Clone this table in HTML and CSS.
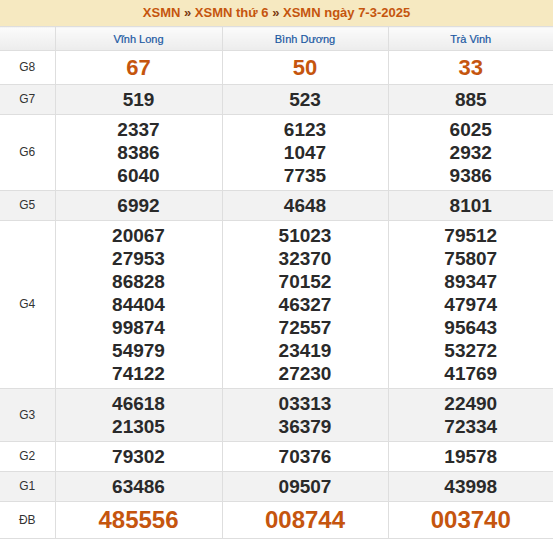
FILE: index.html
```html
<!DOCTYPE html>
<html lang="vi">
<head>
<meta charset="utf-8">
<title>XSMN ngày 7-3-2025</title>
<link rel="stylesheet" href="styles.css">
</head>
<body>
<div class="box">
  <h2 class="title"><a>XSMN</a> » <a>XSMN thứ 6</a> » <a>XSMN ngày 7-3-2025</a></h2>
  <table class="kq">
    <colgroup><col class="c0"><col class="c1"><col class="c2"><col class="c3"></colgroup>
    <thead>
      <tr><th class="lbl"></th><th>Vĩnh Long</th><th>Bình Dương</th><th>Trà Vinh</th></tr>
    </thead>
    <tbody>
      <tr class="g8"><td class="lbl">G8</td><td>67</td><td>50</td><td>33</td></tr>
      <tr class="alt"><td class="lbl">G7</td><td>519</td><td>523</td><td>885</td></tr>
      <tr><td class="lbl">G6</td><td>2337<br>8386<br>6040</td><td>6123<br>1047<br>7735</td><td>6025<br>2932<br>9386</td></tr>
      <tr class="alt"><td class="lbl">G5</td><td>6992</td><td>4648</td><td>8101</td></tr>
      <tr><td class="lbl">G4</td><td>20067<br>27953<br>86828<br>84404<br>99874<br>54979<br>74122</td><td>51023<br>32370<br>70152<br>46327<br>72557<br>23419<br>27230</td><td>79512<br>75807<br>89347<br>47974<br>95643<br>53272<br>41769</td></tr>
      <tr class="alt"><td class="lbl">G3</td><td>46618<br>21305</td><td>03313<br>36379</td><td>22490<br>72334</td></tr>
      <tr><td class="lbl">G2</td><td>79302</td><td>70376</td><td>19578</td></tr>
      <tr class="alt"><td class="lbl">G1</td><td>63486</td><td>09507</td><td>43998</td></tr>
      <tr class="db"><td class="lbl">ĐB</td><td>485556</td><td>008744</td><td>003740</td></tr>
    </tbody>
  </table>
</div>
</body>
</html>
```
FILE: styles.css
```css
html, body {
  margin: 0;
  padding: 0;
  background: #fff;
  font-family: "Liberation Sans", Arial, sans-serif;
}
.box {
  width: 553px;
}
.title {
  margin: 0;
  height: 26px;
  line-height: 26px;
  background: #f6e9c1;
  text-align: center;
  font-size: 13px;
  font-weight: bold;
  color: #7a3a10;
}
.title a {
  color: #c5550e;
}
.kq {
  width: 553px;
  border-collapse: collapse;
  table-layout: fixed;
}
.kq col.c0 { width: 55px; }
.kq col.c1 { width: 167px; }
.kq col.c2 { width: 166px; }
.kq col.c3 { width: 165px; }
.kq th, .kq td {
  border: 1px solid #dedede;
  text-align: center;
  padding: 0;
}
.kq tr > :first-child { border-left: none; }
.kq tr > :last-child { border-right: none; }
.kq thead th {
  height: 23px;
  background: linear-gradient(#fbfbfb, #ececec);
  font-size: 11px;
  font-weight: normal;
  color: #1a58a2;
  -webkit-text-stroke: 0.2px #1a58a2;
}
.kq tbody td {
  padding: 3px 0;
  font-size: 19px;
  line-height: 23px;
  font-weight: bold;
  color: #2a2a2a;
}
.kq tbody td.lbl {
  font-size: 12px;
  font-weight: normal;
  color: #333;
}
.kq tr.alt td { background: #f2f2f2; }
.kq tr.g8 td:not(.lbl) {
  font-size: 22px;
  line-height: 27px;
  color: #c5550e;
}
.kq tr.db td:not(.lbl) {
  font-size: 24px;
  line-height: 30px;
  color: #c5550e;
}
```
